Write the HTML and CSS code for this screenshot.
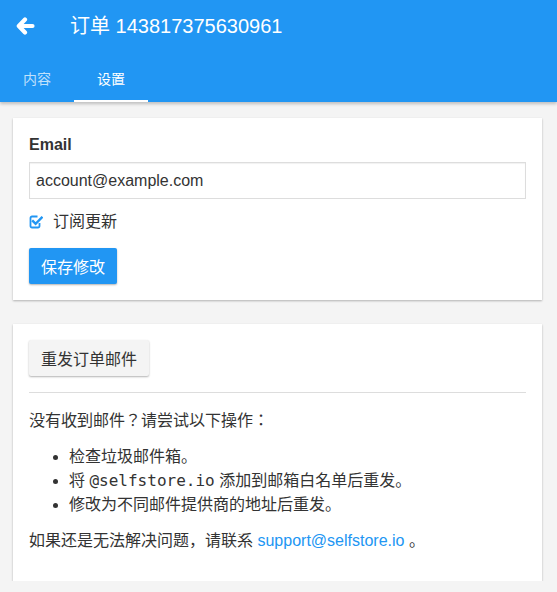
FILE: index.html
```html
<!DOCTYPE html>
<html>
<head>
<meta charset="utf-8">
<title>订单 143817375630961</title>
<link rel="stylesheet" href="styles.css">
</head>
<body>
<header class="appbar">
  <div class="titlebar">
    <a class="back" href="#" aria-label="返回">
      <svg width="19" height="18" viewBox="0 0 19 18"><path d="M9 2.5 L2.8 9 L9 15.5 M3.5 9 H16.5" fill="none" stroke="#fff" stroke-width="4.2" stroke-linecap="round" stroke-linejoin="round"/></svg>
    </a>
    <h1 class="title">订单 143817375630961</h1>
  </div>
  <nav class="tabs">
    <a class="tab" href="#">内容</a>
    <a class="tab active" href="#">设置</a>
  </nav>
</header>
<main class="content">
  <section class="card">
    <label class="field-label" for="email">Email</label>
    <input id="email" class="text-input" type="text" value="account@example.com">
    <div class="check-row">
      <svg class="check-icon" width="14" height="14" viewBox="0 0 14 14"><path d="M10.5 8 V11 a1.5 1.5 0 0 1 -1.5 1.5 H3 a1.5 1.5 0 0 1 -1.5 -1.5 V3 A1.5 1.5 0 0 1 3 1.5 H8.5" fill="none" stroke="#2196f3" stroke-width="1.8"/><path d="M4 6.2 L6.6 8.8 L12.6 2.6" fill="none" stroke="#2196f3" stroke-width="2.4" stroke-linecap="square"/></svg>
      <span>订阅更新</span>
    </div>
    <button class="btn btn-primary" type="button">保存修改</button>
  </section>
  <section class="card">
    <button class="btn btn-default" type="button">重发订单邮件</button>
    <hr class="divider">
    <p class="para">没有收到邮件？请尝试以下操作：</p>
    <ul class="list">
      <li>检查垃圾邮件箱。</li>
      <li>将 <code class="code">@selfstore.io</code> 添加到邮箱白名单后重发。</li>
      <li>修改为不同邮件提供商的地址后重发。</li>
    </ul>
    <p class="para">如果还是无法解决问题，请联系 <a class="link" href="#">support@selfstore.io</a> 。</p>
  </section>
</main>
</body>
</html>
```

FILE: styles.css
```css
* { box-sizing: border-box; }
html, body {
  margin: 0;
  padding: 0;
  background: #f4f4f4;
  font-family: "Liberation Sans", "Noto Sans CJK KR", sans-serif;
  font-size: 16px;
  color: #333;
}
.appbar {
  background: #2196f3;
  color: #fff;
  box-shadow: 0 2px 3px rgba(0,0,0,0.22);
  position: relative;
  z-index: 1;
}
.titlebar {
  height: 54px;
  display: flex;
  align-items: center;
  padding-left: 16px;
  padding-bottom: 2px;
}
.back {
  display: flex;
  width: 19px;
  height: 18px;
  margin-right: 35px;
}
.title {
  margin: 0;
  font-size: 20px;
  font-weight: normal;
  line-height: 24px;
}
.tabs {
  display: flex;
  height: 48px;
}
.tab {
  display: flex;
  align-items: center;
  padding: 0 23px;
  font-size: 14px;
  color: rgba(255,255,255,0.72);
  text-decoration: none;
  border-bottom: 2px solid transparent;
  padding-top: 2px;
}
.tab.active {
  color: #fff;
  border-bottom-color: #fff;
}
.content {
  padding: 16px 15px 0 13px;
  display: flex;
  flex-direction: column;
  gap: 24px;
}
.card {
  background: #fff;
  padding: 16px;
  box-shadow: 0 1px 2px rgba(0,0,0,0.28);
  display: flex;
  flex-direction: column;
  align-items: flex-start;
}
.field-label {
  font-weight: bold;
  line-height: 22px;
  margin-bottom: 6px;
}
.text-input {
  width: 100%;
  height: 37px;
  border: 1px solid #ddd;
  box-shadow: inset 0 1px 1px rgba(0,0,0,0.06);
  padding: 0 6px;
  font-family: "Liberation Sans", sans-serif;
  font-size: 16px;
  color: #333;
  margin: 0 0 11px;
  outline: none;
}
.check-row {
  display: flex;
  align-items: center;
  gap: 10px;
  line-height: 24px;
  font-size: 16px;
  margin-bottom: 14px;
}
.check-icon { display: block; }
.btn {
  height: 36px;
  padding: 0 12px;
  border: none;
  border-radius: 2px;
  font-family: "Liberation Sans", "Noto Sans CJK KR", sans-serif;
  font-size: 16px;
  box-shadow: 0 1px 2px rgba(0,0,0,0.3);
  cursor: pointer;
}
.btn-primary {
  background: #2196f3;
  color: #fff;
}
.btn-default {
  background: #f4f4f4;
  color: #333;
}
.divider {
  width: 100%;
  border: none;
  border-top: 1px solid #ddd;
  margin: 16px 0;
}
.para {
  margin: 0 0 12px;
  line-height: 24px;
}
.list {
  margin: 0 0 12px;
  padding-left: 40px;
  line-height: 24px;
}
.code {
  font-family: "DejaVu Sans Mono", monospace;
  font-size: 16px;
}
.link {
  color: #2196f3;
  text-decoration: none;
}
```
